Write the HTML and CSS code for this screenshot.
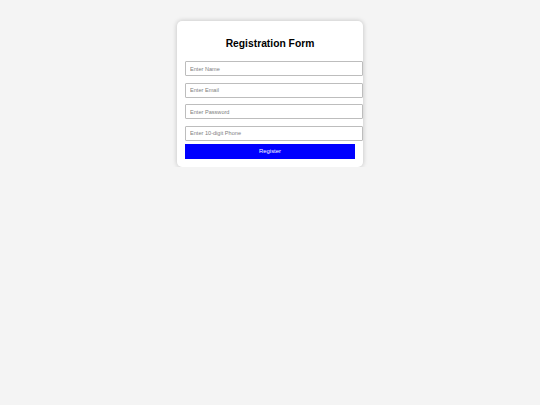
FILE: index.html
```html
<!DOCTYPE html>
<html>
<head>
<meta charset="utf-8">
<link rel="stylesheet" href="styles.css">
</head>
<body>
<div class="card">
  <h2 class="title">Registration Form</h2>
  <form class="form">
    <input class="field" type="text" placeholder="Enter Name">
    <input class="field" type="email" placeholder="Enter Email">
    <input class="field" type="password" placeholder="Enter Password">
    <input class="field field-last" type="text" placeholder="Enter 10-digit Phone">
    <button class="btn" type="button">Register</button>
  </form>
</div>
</body>
</html>
```

FILE: styles.css
```css
html, body {
  margin: 0;
  padding: 0;
  background: #f4f4f4;
  font-family: "Liberation Sans", Arial, sans-serif;
}
body {
  padding-top: 21px;
}
.card {
  width: 170px;
  margin: 0 auto;
  padding: 8px;
  background: #fff;
  border-radius: 5px;
  box-shadow: 0 0 5px rgba(0, 0, 0, 0.22);
}
.title {
  margin: 8px 0 10px;
  font-size: 10.3px;
  line-height: 14px;
  font-weight: bold;
  text-align: center;
  color: #000;
}
.form {
  display: flex;
  flex-direction: column;
  align-items: flex-start;
}
.field {
  display: block;
  box-sizing: content-box;
  width: 100%;
  height: 13px;
  margin: 0 0 6.6px;
  padding: 0 2px 0 4px;
  border: 1px solid #bdbdbd;
  border-radius: 1px;
  font-family: "Liberation Sans", Arial, sans-serif;
  font-size: 5.6px;
  color: #333;
  background: #fff;
  outline: none;
}
.field::placeholder {
  color: #808080;
}
.field-last {
  margin-bottom: 3px;
}
.btn {
  display: block;
  width: 100%;
  height: 15px;
  margin: 0;
  padding: 0;
  border: none;
  background: #0000ff;
  color: #fff;
  font-family: "Liberation Sans", Arial, sans-serif;
  font-size: 5.9px;
  cursor: pointer;
}
```
